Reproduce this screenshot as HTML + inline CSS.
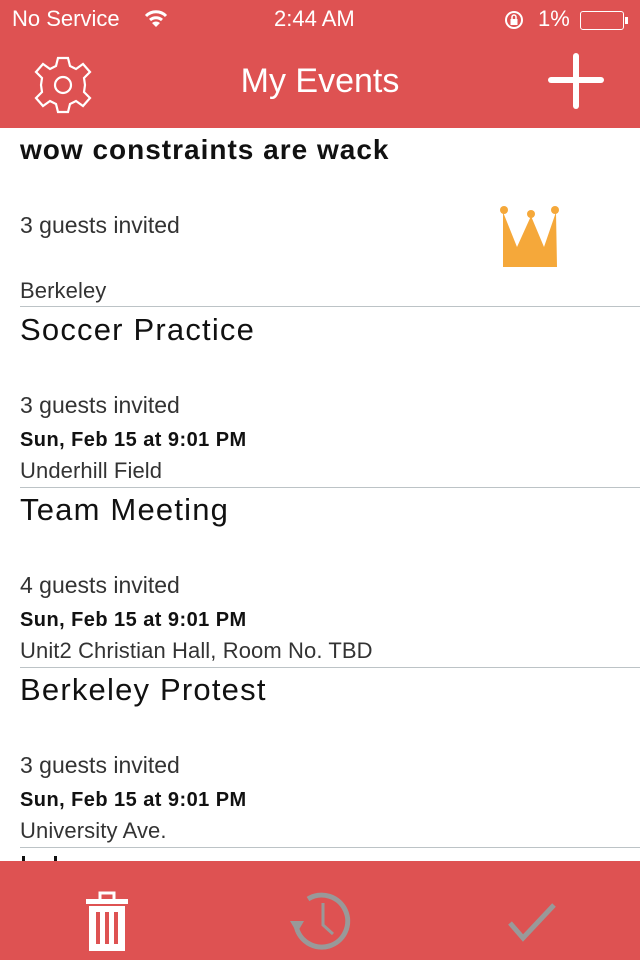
<!DOCTYPE html>
<html><head><meta charset="utf-8"><style>
*{margin:0;padding:0;box-sizing:border-box}
body{width:640px;height:960px;overflow:hidden;background:#fff;font-family:"Liberation Sans",sans-serif;position:relative}
.hdr{position:absolute;left:0;top:0;width:640px;height:128px;background:#de5252;color:#fff}
.st{position:absolute;top:6px;font-size:22px}
.title{position:absolute;top:62px;width:640px;text-align:center;font-size:34px}
.row{position:absolute;left:0;width:640px;height:180px}
.t{position:absolute;left:20px;font-size:31px;color:#111;letter-spacing:1.2px}
.g{position:absolute;left:20px;font-size:23px;color:#333}
.d{position:absolute;left:20px;font-size:20px;color:#111;font-weight:bold;letter-spacing:0.45px}
.l{position:absolute;left:20px;font-size:22px;color:#333;letter-spacing:0.1px}
.sep{position:absolute;left:20px;right:0;height:1px;background:#bcc3c6}
.bot{position:absolute;left:0;top:861px;width:640px;height:99px;background:#de5252}
</style></head><body>
<div class="hdr">
<div class="st" style="left:12px">No Service</div>
<svg style="position:absolute;left:144px;top:10px" width="24" height="18" viewBox="0 0 24 18"><path d="M2 6 A14 14 0 0 1 22 6" stroke="#fff" stroke-width="3" fill="none"/><path d="M6 10 A9 9 0 0 1 18 10" stroke="#fff" stroke-width="3" fill="none"/><path d="M12 17 L8 13 A6 6 0 0 1 16 13 Z" fill="#fff"/></svg>
<div class="st" style="left:274px">2:44 AM</div>
<svg style="position:absolute;left:504px;top:10px" width="22" height="20" viewBox="0 0 22 20"><circle cx="10" cy="10" r="8" stroke="#fff" stroke-width="2" fill="none"/><rect x="6.5" y="9" width="7" height="6" fill="#fff"/><path d="M8 9V7a2 2 0 0 1 4 0v2" stroke="#fff" stroke-width="1.5" fill="none"/></svg>
<div class="st" style="left:538px">1%</div>
<div style="position:absolute;left:580px;top:11px;width:44px;height:19px;border:1.5px solid #fff;border-radius:3px"></div>
<div style="position:absolute;left:625px;top:17px;width:3px;height:7px;background:#fff"></div>
<svg style="position:absolute;left:33px;top:55px" width="60" height="60" viewBox="-30 -30 60 60"><path fill="none" stroke="#fff" stroke-width="2.2" d="M-5 -27 L5 -27 L7 -19 L13 -16 L20 -21 L27 -13 L21 -7 L22 0 L21 7 L27 13 L20 21 L13 16 L7 19 L5 27 L-5 27 L-7 19 L-13 16 L-20 21 L-27 13 L-21 7 L-22 0 L-21 -7 L-27 -13 L-20 -21 L-13 -16 L-7 -19 Z"/><circle r="8" fill="none" stroke="#fff" stroke-width="2.2"/></svg>
<div class="title">My Events</div>
<div style="position:absolute;left:548px;top:77px;width:56px;height:6px;background:#fff;border-radius:3px"></div>
<div style="position:absolute;left:573px;top:53px;width:6px;height:56px;background:#fff;border-radius:3px"></div>
</div>

<div class="row" style="top:128px">
<div class="t" style="top:6px;font-weight:bold;font-size:28px;letter-spacing:1px">wow constraints are wack</div>
<div class="g" style="top:84px">3 guests invited</div>
<div class="l" style="top:150px">Berkeley</div>
<svg style="position:absolute;left:500px;top:78px" width="60" height="62" viewBox="500 206 60 62"><circle cx="504" cy="210" r="4" fill="#f5a83a"/><circle cx="531" cy="214" r="4" fill="#f5a83a"/><circle cx="555" cy="210" r="4" fill="#f5a83a"/><path d="M503 212 L517 247 L531 216 L544 247 L556 212 L557 267 L503 267 Z" fill="#f5a83a"/></svg>
<div class="sep" style="top:178px"></div>
</div>

<div class="row" style="top:308px">
<div class="t" style="top:4px">Soccer Practice</div>
<div class="g" style="top:84px">3 guests invited</div>
<div class="d" style="top:121px">Sun, Feb 15 at 9:01 PM</div>
<div class="l" style="top:150px">Underhill Field</div>
<div class="sep" style="top:179px"></div>
</div>

<div class="row" style="top:488px">
<div class="t" style="top:4px">Team Meeting</div>
<div class="g" style="top:84px">4 guests invited</div>
<div class="d" style="top:121px">Sun, Feb 15 at 9:01 PM</div>
<div class="l" style="top:150px">Unit2 Christian Hall, Room No. TBD</div>
<div class="sep" style="top:179px"></div>
</div>

<div class="row" style="top:668px">
<div class="t" style="top:4px">Berkeley Protest</div>
<div class="g" style="top:84px">3 guests invited</div>
<div class="d" style="top:121px">Sun, Feb 15 at 9:01 PM</div>
<div class="l" style="top:150px">University Ave.</div>
<div class="sep" style="top:179px"></div>
</div>
<div style="position:absolute;left:22px;top:856px;width:3px;height:6px;background:#111"></div>
<div style="position:absolute;left:54px;top:856px;width:3px;height:6px;background:#111"></div>

<div class="bot">
<svg style="position:absolute;left:85px;top:30px" width="44" height="60" viewBox="0 0 44 60"><rect x="1" y="8" width="42" height="5" fill="#fff"/><rect x="15" y="2" width="14" height="8" fill="none" stroke="#fff" stroke-width="3"/><path d="M4 15 H40 V60 H4 Z" fill="#fff"/><rect x="11" y="21" width="4" height="32" fill="#de5252"/><rect x="20" y="21" width="4" height="32" fill="#de5252"/><rect x="29" y="21" width="4" height="32" fill="#de5252"/></svg>
<svg style="position:absolute;left:286px;top:28px" width="70" height="64" viewBox="0 0 70 64"><path d="M10 36 A26 26 0 1 0 22 10" stroke="#999" stroke-width="5" fill="none"/><path d="M2 30 L16 30 L9 42 Z" fill="#999" transform="translate(2 2)"/><path d="M37 14 V36 L47 45" stroke="#999" stroke-width="3" fill="none"/></svg>
<svg style="position:absolute;left:508px;top:42px" width="50" height="40" viewBox="0 0 50 40"><path d="M2 20 L15 35 L46 2" stroke="#999" stroke-width="5" fill="none"/></svg>
</div>
</body></html>
